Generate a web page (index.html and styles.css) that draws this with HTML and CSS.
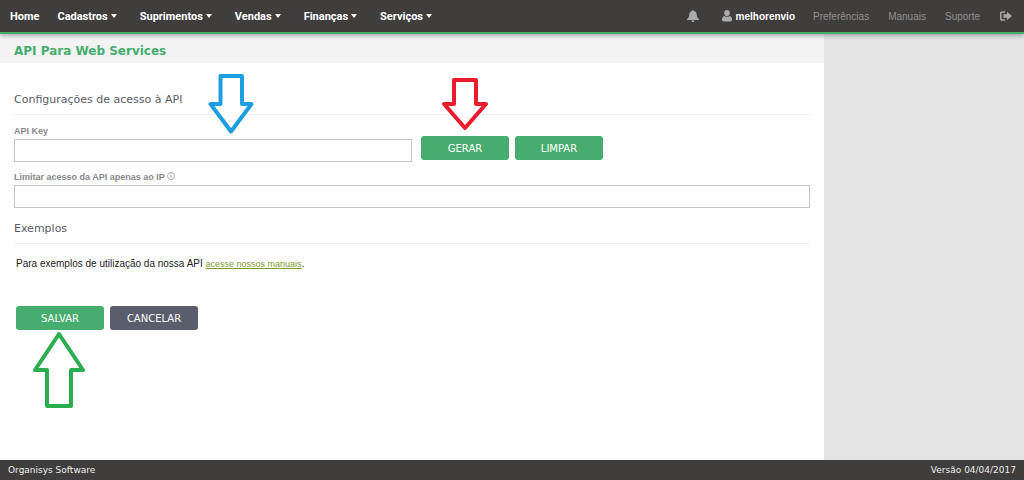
FILE: index.html
```html
<!DOCTYPE html>
<html lang="pt-BR">
<head>
<meta charset="utf-8">
<meta name="viewport" content="width=device-width, initial-scale=1">
<title>API Para Web Services</title>
<link rel="stylesheet" href="styles.css">
</head>
<body>
<header class="topbar">
  <nav class="menu">
    <a href="#">Home</a>
    <a href="#" class="has-caret">Cadastros</a>
    <a href="#" class="has-caret">Suprimentos</a>
    <a href="#" class="has-caret">Vendas</a>
    <a href="#" class="has-caret">Finanças</a>
    <a href="#" class="has-caret">Serviços</a>
  </nav>
  <nav class="account">
    <a href="#" class="bell" aria-label="Notificações"><svg width="12" height="12" viewBox="0 0 12 12"><path d="M6 0c.6 0 .9.4.9.9C8.700 1.300 9.600 2.700 9.700 4.500c.1 2.200.7 3.600 2.300 4.700v.8H0v-.8c1.600-1.100 2.200-2.500 2.300-4.700.1-1.800 1-3.200 2.800-3.600C5.100.4 5.400 0 6 0zM4.400 10.500h3.200C7.500 11.500 6.900 12 6 12s-1.500-.5-1.600-1.500z"/></svg></a>
    <a href="#" class="user"><svg width="10" height="12" viewBox="0 0 10 12"><path d="M5 0c1.700 0 2.800 1.300 2.800 3.100S6.700 6.400 5 6.400 2.200 4.900 2.200 3.100 3.300 0 5 0zM2.200 6c1.700 1.400 3.900 1.400 5.600 0C9.500 6.300 10 8 10 9.800c0 1.100-.7 1.700-1.700 1.700H1.700C.7 11.500 0 10.900 0 9.800 0 8 .5 6.300 2.200 6z"/></svg>melhorenvio</a>
    <a href="#">Preferências</a>
    <a href="#">Manuais</a>
    <a href="#">Suporte</a>
    <a href="#" class="logout" aria-label="Sair"><svg width="12" height="10" viewBox="0 0 12 10"><path d="M5 .2v1.500H2.500c-.6 0-1 .4-1 1v4.600c0 .6.400 1 1 1H5v1.500H2.300C.9 9.800 0 8.900 0 7.500v-5C0 1.100.9.200 2.300.2zM7 .7 11.900 5 7 9.300V6.800H3.400V3.200H7z"/></svg></a>
  </nav>
</header>

<div class="page">
  <main class="content">
    <h1 class="title">API Para Web Services</h1>
    <form class="form">
      <h2 class="section">Configurações de acesso à API</h2>
      <div class="key-row">
        <div class="field key-field">
          <label for="key">API Key</label>
          <input id="key" type="text">
        </div>
        <button type="button" class="btn">GERAR</button>
        <button type="button" class="btn">LIMPAR</button>
      </div>
      <div class="field ip-field">
        <label for="ip">Limitar acesso da API apenas ao IP
          <svg width="8" height="8" viewBox="0 0 8 8"><circle cx="4" cy="4" r="3.500" fill="none" stroke="#aaa"/><path d="M3.500 1.500h1v1h-1zM3 3.200h1.500V6h-1V4H3z"/></svg></label>
        <input id="ip" type="text">
      </div>
      <h2 class="section">Exemplos</h2>
      <p class="examples">Para exemplos de utilização da nossa API <a href="#">acesse nossos manuais</a>.</p>
      <div class="actions">
        <button type="submit" class="btn">SALVAR</button>
        <button type="button" class="btn dark">CANCELAR</button>
      </div>
    </form>
    <svg class="arrow arrow-key" width="46" height="62" viewBox="0 0 46 62"><path d="M12.500 3H34v28h9.500L23 58.500 2.500 31h10z"/></svg>
    <svg class="arrow arrow-generate" width="48" height="54" viewBox="0 0 48 54"><path d="M13 3h22v24h10L24 51 3 27h10z"/></svg>
    <svg class="arrow arrow-save" width="54" height="78" viewBox="0 0 54 78"><path d="M27 3 3 39h12v36h24V39h12z"/></svg>
  </main>
  <aside class="side"></aside>
</div>

<footer class="footer"><span>Organisys Software</span><span>Versão 04/04/2017</span></footer>
</body>
</html>
```
FILE: styles.css
```css
* { box-sizing: border-box; }

body {
  margin: 0;
  min-height: 100vh;
  display: flex;
  flex-direction: column;
  font-family: "Liberation Sans", Arial, sans-serif;
  font-size: 10px;
  background: #fff;
}

svg { fill: currentColor; }

.topbar {
  position: relative;
  z-index: 1;
  display: flex;
  justify-content: space-between;
  height: 34px;
  padding: 0 12px 0 10px;
  background: #403d3d;
  border-bottom: 2px solid #46ad6e;
  box-shadow: 0 1px 5px rgba(0, 0, 0, .4);
}

.topbar a {
  display: flex;
  align-items: center;
  color: #fff;
  text-decoration: none;
}

.menu {
  display: flex;
  gap: 23px;
  font-family: Roboto, sans-serif;
  font-size: 11px;
  font-weight: bold;
}

.menu a:first-child { margin-right: -5px; }

.has-caret::after {
  content: "";
  margin-left: 3px;
  border: 3px solid transparent;
  border-top: 4px solid currentColor;
  border-bottom: 0;
}

.account { display: flex; gap: 19px; }
.account a { color: #929090; }
.account .bell { margin-right: 4px; color: #aaa; }
.account .user { gap: 4px; margin-right: -1px; color: #fff; font-weight: bold; }
.user svg { color: #aaa; }
.account .logout { margin-left: 1px; color: #aaa; }

.page { flex: 1; display: flex; }

.content {
  position: relative;
  flex: 1;
}

.side { width: 200px; background: #e4e4e4; }

.title {
  margin: 0;
  padding: 5px 14px 0;
  background: #f3f3f3;
  color: #46ad6e;
  font: bold 12px/24px "DejaVu Sans", Verdana, sans-serif;
}

.form { padding: 26px 14px 0; }

.section {
  margin: 0;
  padding-bottom: 3px;
  border-bottom: 1px solid #eee;
  color: #5a5a64;
  font: 11px/22px "DejaVu Sans", Verdana, sans-serif;
}

.key-row {
  display: flex;
  align-items: flex-end;
  gap: 6px;
  margin-top: 9px;
}

.field { display: flex; flex-direction: column; }
.key-field { width: 50%; margin-right: 3px; }
.key-row .btn { margin-bottom: 2px; }
.ip-field { margin: 8px 0 10px; }

.field label {
  color: #888;
  font-size: 9px;
  font-weight: bold;
  line-height: 15px;
}

.field label svg { color: #aaa; }

.field input {
  height: 23px;
  padding: 0 6px;
  border: 1px solid #c4c4c4;
  background: #fff;
}

.btn {
  width: 88px;
  height: 24px;
  padding: 0;
  border: 0;
  border-radius: 3px;
  background: #46ad6e;
  color: #fff;
  font: 10px "DejaVu Sans", Verdana, sans-serif;
}

.btn.dark { background: #5a5d6b; }

.examples {
  margin: 12px 2px 0;
  line-height: 16px;
  color: #222;
}

.examples a { color: #7b9c2c; font-size: 9px; }

.actions { display: flex; gap: 6px; margin: 34px 2px 16px; }

.arrow {
  position: absolute;
  fill: #fff;
  stroke-width: 4px;
  stroke-linejoin: round;
}

.arrow-key { left: 208px; top: 39px; stroke: #1c9fe0; }
.arrow-generate { left: 441px; top: 43px; stroke: #e81c2c; }
.arrow-save { left: 32px; top: 297px; stroke: #2aae4f; }

.footer {
  display: flex;
  justify-content: space-between;
  padding: 0 8px;
  background: #403d3d;
  color: #eee;
  font: 9px/20px "DejaVu Sans", Verdana, sans-serif;
}
```
